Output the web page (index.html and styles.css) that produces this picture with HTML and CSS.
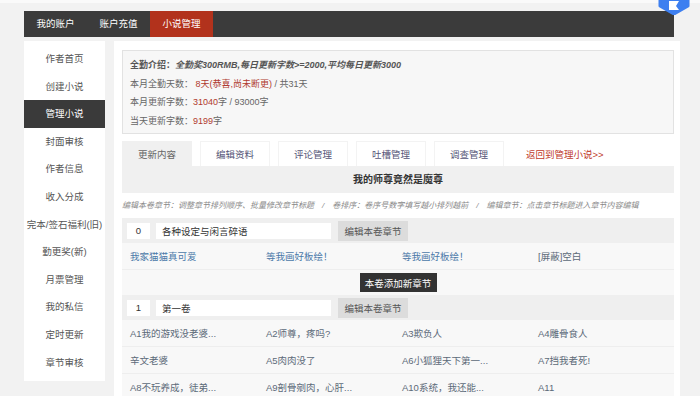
FILE: index.html
```html
<!DOCTYPE html>
<html lang="zh-CN">

<head>
    <meta charset="UTF-8">
    <meta name="viewport" content="width=device-width, initial-scale=1.0">
    <title>小说管理</title>
    <link rel="stylesheet" href="styles.css">
</head>

<body>
    <div class="float-badge">
        <svg width="34" height="34" viewBox="0 0 34 34">
            <path d="M17 1 L31 9 L31 25 L17 33 L3 25 L3 9 Z" fill="#3d7ff0" stroke="#3d7ff0" stroke-width="3" stroke-linejoin="round"/>
            <path d="M12 20 L22 20 L19 25 L22 29 L12 29 Z" fill="#fff"/>
        </svg>
    </div>

    <div class="page">
        <nav class="topnav">
            <a href="#">我的账户</a>
            <a href="#">账户充值</a>
            <a href="#" class="on">小说管理</a>
        </nav>

        <div class="layout">
            <ul class="sidenav">
                <li>作者首页</li>
                <li>创建小说</li>
                <li class="on">管理小说</li>
                <li>封面审核</li>
                <li>作者信息</li>
                <li>收入分成</li>
                <li>完本/签石福利(旧)</li>
                <li>勤更奖(新)</li>
                <li>月票管理</li>
                <li>我的私信</li>
                <li>定时更新</li>
                <li>章节审核</li>
            </ul>

            <main class="panel">
                <div class="info">
                    <p><b>全勤介绍：</b><b><i>全勤奖300RMB,每日更新字数&gt;=2000,平均每日更新3000</i></b></p>
                    <p>本月全勤天数： <span class="red">8天(恭喜,尚未断更)</span> / 共31天</p>
                    <p>本月更新字数：<span class="red">31040</span>字 / 93000字</p>
                    <p>当天更新字数：<span class="red">9199</span>字</p>
                </div>

                <div class="tabs">
                    <a href="#" class="tab on">更新内容</a>
                    <a href="#" class="tab">编辑资料</a>
                    <a href="#" class="tab">评论管理</a>
                    <a href="#" class="tab">吐槽管理</a>
                    <a href="#" class="tab">调查管理</a>
                    <a href="#" class="back">返回到管理小说&gt;&gt;</a>
                </div>

                <div class="book-title">我的师尊竟然是魔尊</div>

                <p class="hint">编辑本卷章节：调整章节排列顺序、批量修改章节标题<span class="sep">/</span>卷排序：卷序号数字填写越小排列越前<span class="sep">/</span>编辑章节：点击章节标题进入章节内容编辑</p>

                <div class="volume">
                    <input class="vol-no" type="text" value="0">
                    <input class="vol-name" type="text" value="各种设定与闲言碎语">
                    <button class="vol-btn">编辑本卷章节</button>
                </div>
                <div class="chapters">
                    <a href="#" class="blue">我家猫猫真可爱</a>
                    <a href="#" class="blue">等我画好板绘！</a>
                    <a href="#" class="blue">等我画好板绘！</a>
                    <a href="#">[屏蔽]空白</a>
                </div>
                <div class="add-row">
                    <button class="add-btn">本卷添加新章节</button>
                </div>

                <div class="volume">
                    <input class="vol-no" type="text" value="1">
                    <input class="vol-name" type="text" value="第一卷">
                    <button class="vol-btn">编辑本卷章节</button>
                </div>
                <div class="chapters">
                    <a href="#">A1我的游戏没老婆...</a>
                    <a href="#">A2师尊，疼吗?</a>
                    <a href="#">A3欺负人</a>
                    <a href="#">A4雕骨食人</a>
                </div>
                <div class="chapters">
                    <a href="#">辛文老婆</a>
                    <a href="#">A5肉肉没了</a>
                    <a href="#">A6小狐狸天下第一...</a>
                    <a href="#">A7挡我者死!</a>
                </div>
                <div class="chapters">
                    <a href="#">A8不玩养成，徒弟...</a>
                    <a href="#">A9剖骨剜肉，心肝...</a>
                    <a href="#">A10系统，我还能...</a>
                    <a href="#">A11</a>
                </div>
            </main>
        </div>
    </div>
</body>

</html>
```

FILE: styles.css
```css
body {
    margin: 0;
    border-top: 3px solid #fafafa;
    background-color: #f2f2f2;
    font-family: "Liberation Sans", "Noto Sans CJK SC", sans-serif;
    font-size: 9px;
    color: #555;
    overflow: hidden;
}

a {
    text-decoration: none;
    color: inherit;
}

p {
    margin: 0;
}

.page {
    width: 650px;
    margin-left: 24px;
    padding-top: 8px;
}

.topnav {
    display: flex;
    height: 26px;
    background-color: #3b3b3b;
}

.topnav a {
    width: 63px;
    line-height: 26px;
    text-align: center;
    color: #fff;
    font-size: 9.5px;
}

.topnav a.on {
    background-color: #b2321c;
}

.layout {
    display: flex;
    align-items: flex-start;
    gap: 9px;
    margin-top: 4px;
}

.sidenav {
    list-style: none;
    margin: 0;
    width: 81px;
    padding: 4px 0 5px;
    background-color: #fff;
    flex-shrink: 0;
}

.sidenav li {
    height: 27.6px;
    line-height: 27.6px;
    text-align: center;
    color: #555;
    font-size: 9.5px;
    white-space: nowrap;
}

.sidenav li.on {
    background-color: #3a3a3a;
    color: #fff;
}

.panel {
    flex: 1;
    background-color: #fff;
    padding: 9px 6px 0 8px;
    min-height: 400px;
}

.info {
    background-color: #f7f7f7;
    border: 1px solid #e2e2e2;
    padding: 5px 7px 3px;
    line-height: 18.5px;
    color: #666;
}

.info b {
    color: #555;
}

.red {
    color: #b03a2e;
}

.tabs {
    display: flex;
    align-items: center;
    gap: 8px;
    margin-top: 7px;
    height: 25px;
}

.tab {
    width: 70px;
    height: 25px;
    line-height: 25px;
    text-align: center;
    box-sizing: border-box;
    border: 1px solid #f3f3f3;
    border-bottom: none;
    color: #557;
    font-size: 9.5px;
}

.tab.on {
    background-color: #f0f0f0;
    border-color: #f0f0f0;
    color: #666;
}

.back {
    margin-left: 14px;
    color: #c0392b;
    font-size: 9.5px;
}

.book-title {
    height: 27px;
    line-height: 27px;
    background-color: #f0f0f0;
    text-align: center;
    font-weight: bold;
    font-size: 10px;
    color: #333;
}

.hint {
    height: 25px;
    line-height: 25px;
    font-size: 8px;
    font-style: italic;
    color: #888;
    white-space: nowrap;
}

.sep {
    margin: 0 8px;
}

.volume {
    display: flex;
    align-items: center;
    height: 25px;
    padding-left: 5px;
    background-color: #efefef;
}

.volume input {
    height: 16px;
    box-sizing: border-box;
    border: none;
    background-color: #fff;
    font-family: inherit;
    font-size: 9.5px;
    color: #333;
    padding: 0 6px;
}

.vol-no {
    width: 23px;
    text-align: center;
}

.vol-name {
    width: 175px;
    margin-left: 6px;
}

.vol-btn {
    width: 70px;
    height: 20px;
    margin-left: 7px;
    border: none;
    background-color: #dcdcdc;
    font-family: inherit;
    font-size: 9.5px;
    color: #555;
    padding: 0;
}

.chapters {
    display: grid;
    grid-template-columns: repeat(4, 136px);
    height: 26px;
    align-items: center;
    padding-left: 8px;
    background-color: #f8f8f8;
    border-bottom: 1px solid #eeeeee;
}

.chapters a {
    color: #5c6a78;
    font-size: 9.5px;
    white-space: nowrap;
}

.chapters a.blue {
    color: #4b79a8;
}

.add-row {
    display: flex;
    justify-content: center;
    align-items: center;
    height: 25px;
    background-color: #f8f8f8;
}

.add-btn {
    width: 77px;
    height: 19px;
    border: none;
    padding: 0;
    background-color: #333;
    color: #fff;
    font-family: inherit;
    font-size: 9.5px;
}

.float-badge {
    position: absolute;
    top: -19px;
    left: 657px;
}
```
